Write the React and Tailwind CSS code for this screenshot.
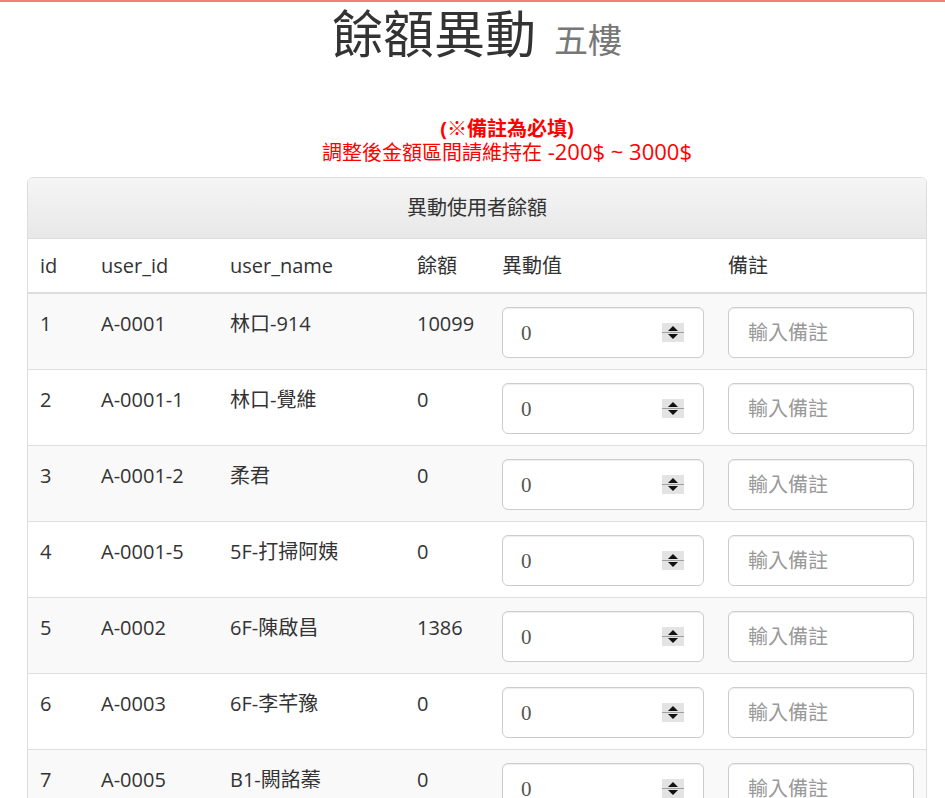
import React from 'react';

const rows = [
  { id: 1, userId: 'A-0001', name: '林口-914', balance: '10099' },
  { id: 2, userId: 'A-0001-1', name: '林口-覺維', balance: '0' },
  { id: 3, userId: 'A-0001-2', name: '柔君', balance: '0' },
  { id: 4, userId: 'A-0001-5', name: '5F-打掃阿姨', balance: '0' },
  { id: 5, userId: 'A-0002', name: '6F-陳啟昌', balance: '1386' },
  { id: 6, userId: 'A-0003', name: '6F-李芊豫', balance: '0' },
  { id: 7, userId: 'A-0005', name: 'B1-闕詺蓁', balance: '0' },
];

const Spinner = () => (
  <svg width="22" height="19" viewBox="0 0 22 19" className="shrink-0">
    <rect x="0" y="0" width="22" height="19" fill="#e3e3e3" />
    <rect x="0" y="9" width="22" height="1" fill="#a0a0a0" />
    <path d="M6 8 L11 3 L16 8 Z" fill="#111" />
    <path d="M6 11 L11 16 L16 11 Z" fill="#111" />
  </svg>
);

export default function App() {
  return (
    <div className="min-h-screen w-full overflow-hidden bg-white border-t-2 border-[#f08080] text-[#333] font-['Open_Sans','Noto_Sans_CJK_TC',sans-serif]">
      <div className="w-[954px]">
        <h1 className="pt-[3px] text-center text-[51px] leading-[56px] font-normal text-[#333] whitespace-nowrap">
          餘額異動<small className="ml-[18px] text-[34px] text-[#777]">五樓</small>
        </h1>

        <div className="mt-[49px] pl-[60px] text-center text-[20px] leading-[23px] text-[#ff0000]">
          <div className="font-bold">(※備註為必填)</div>
          <div>
            調整後金額區間請維持在<span className="text-[22px]"> -200$ ~ 3000$</span>
          </div>
        </div>

        <div className="mx-[27px] mt-[13px] border border-[#ddd] rounded-[6px] overflow-hidden">
          <div className="h-[61px] flex items-center justify-center text-[20px] bg-gradient-to-b from-[#f5f5f5] to-[#e8e8e8] border-b border-[#ddd]">
            異動使用者餘額
          </div>
          <table className="w-full table-fixed border-collapse text-[20px]">
            <colgroup>
              <col className="w-[61px]" />
              <col className="w-[129px]" />
              <col className="w-[187px]" />
              <col className="w-[85px]" />
              <col className="w-[226px]" />
              <col className="w-[210px]" />
            </colgroup>
            <thead>
              <tr className="h-[54px] border-b-2 border-[#ddd]">
                <th className="px-3 text-left font-normal">id</th>
                <th className="px-3 text-left font-normal">user_id</th>
                <th className="px-3 text-left font-normal">user_name</th>
                <th className="px-3 text-left font-normal">餘額</th>
                <th className="px-3 text-left font-normal">異動值</th>
                <th className="px-3 text-left font-normal">備註</th>
              </tr>
            </thead>
            <tbody>
              {rows.map((r, i) => (
                <tr key={r.id} className={`border-t border-[#ddd] ${i % 2 === 0 ? 'bg-[#f9f9f9]' : 'bg-white'}`}>
                  <td className="px-3 pt-[15px] pb-[11px] align-top leading-[29px]">{r.id}</td>
                  <td className="px-3 pt-[15px] pb-[11px] align-top leading-[29px]">{r.userId}</td>
                  <td className="px-3 pt-[15px] pb-[11px] align-top leading-[29px]">{r.name}</td>
                  <td className="px-3 pt-[15px] pb-[11px] align-top leading-[29px]">{r.balance}</td>
                  <td className="px-3 pt-[13px] pb-[11px] align-top">
                    <div className="h-[51px] flex items-center pl-[18px] pr-[19px] bg-white border border-[#ccc] rounded-[6px] shadow-[inset_0_1px_1px_rgba(0,0,0,0.075)]">
                      <input
                        readOnly
                        value="0"
                        className="flex-1 min-w-0 bg-transparent outline-none text-[21px] text-[#555] font-['Liberation_Serif',serif] mt-[3px]"
                      />
                      <Spinner />
                    </div>
                  </td>
                  <td className="px-3 pt-[13px] pb-[11px] align-top">
                    <input
                      placeholder="輸入備註"
                      className="w-full h-[51px] px-[19px] bg-white border border-[#ccc] rounded-[6px] outline-none text-[20px] text-[#555] placeholder:text-[#999] shadow-[inset_0_1px_1px_rgba(0,0,0,0.075)]"
                    />
                  </td>
                </tr>
              ))}
            </tbody>
          </table>
        </div>
      </div>
    </div>
  );
}
